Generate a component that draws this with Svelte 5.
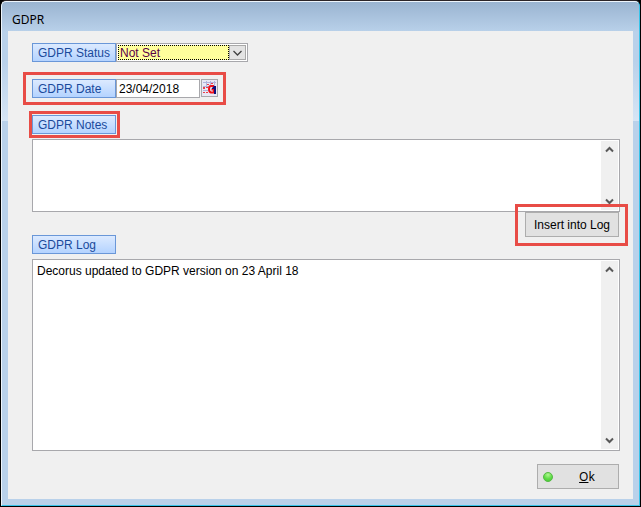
<script>
  let status = $state('Not Set');
  let date = $state('23/04/2018');
  let notes = $state('');
  let log = $state('Decorus updated to GDPR version on 23 April 18');

  let notesBox = $state();
  let logBox = $state();

  function insertIntoLog() {
    if (!notes.trim()) return;
    log = log + '\n' + notes;
    notes = '';
  }
</script>

{#snippet scroller(name, box)}
  <div class="scroller">
    <button class="scroll-btn" type="button" aria-label="Scroll {name} up" onclick={() => box?.scrollBy(0, -16)}>
      <svg width="9" height="7" viewBox="0 0 9 7"><path d="M1 5.5 4.5 2 8 5.5" /></svg>
    </button>
    <button class="scroll-btn" type="button" aria-label="Scroll {name} down" onclick={() => box?.scrollBy(0, 16)}>
      <svg width="9" height="7" viewBox="0 0 9 7"><path d="M1 1.5 4.5 5 8 1.5" /></svg>
    </button>
  </div>
{/snippet}

<div class="window">
  <div class="frame">
    <header class="titlebar">GDPR</header>

    <main class="content">
      <div class="row">
        <label class="tag" for="status">GDPR Status</label>
        <div class="combo">
          <select id="status" bind:value={status}>
            <option>Not Set</option>
            <option>Set</option>
          </select>
          <span class="combo-arrow">
            <svg width="9" height="6" viewBox="0 0 9 6"><path d="M.5 1 4.5 5 8.5 1" /></svg>
          </span>
        </div>
      </div>

      <div class="row date-row marked mark-date">
        <label class="tag" for="date">GDPR Date</label>
        <input id="date" class="date" type="text" bind:value={date} />
        <button class="calendar" type="button" aria-label="Pick a date">
          <svg width="15" height="16" viewBox="0 0 15 16">
            <rect width="15" height="16" fill="#e8e8f4" />
            <path d="M1 2.5h13M1 6.5h13M1 10.5h5M4.5 1v5M8.5 1v4M12.500 1v5" stroke="#b0b4dc" />
            <path d="M1 7h2v2H1zM4 7h2v1H4zM1 12h2v1H1zM4 12h2v1H4zM5 4h2v1H5zM9 3h2v1H9z" fill="#e8404c" />
            <path d="M12 6H9Q7 6 7 9T9 12.500H12V9.500H9.500" fill="none" stroke="#f01018" stroke-width="2" />
            <path d="M10 8l2-2h2v8h-2V9h-2z" fill="#10107c" />
          </svg>
        </button>
      </div>

      <div class="row notes-row">
        <div class="marked mark-notes">
          <label class="tag" for="notes">GDPR Notes</label>
        </div>
      </div>

      <div class="memo notes">
        <textarea id="notes" bind:value={notes} bind:this={notesBox}></textarea>
        {@render scroller('notes', notesBox)}
      </div>

      <div class="log-head">
        <label class="tag" for="log">GDPR Log</label>
        <div class="marked mark-insert">
          <button class="btn insert" type="button" onclick={insertIntoLog}>Insert into Log</button>
        </div>
      </div>

      <div class="memo log">
        <textarea id="log" bind:value={log} bind:this={logBox}></textarea>
        {@render scroller('log', logBox)}
      </div>

      <footer class="actions">
        <button class="btn ok" type="button" accesskey="o">
          <svg class="led" width="10" height="10" viewBox="0 0 10 10">
            <defs>
              <radialGradient id="led" cx="50%" cy="25%" r="75%">
                <stop offset="0" stop-color="#b0f890" />
                <stop offset=".6" stop-color="#60dc48" />
                <stop offset="1" stop-color="#48cc34" />
              </radialGradient>
            </defs>
            <circle cx="5" cy="5" r="4.5" fill="url(#led)" stroke="#58b848" />
          </svg>
          <span><u>O</u>k</span>
        </button>
      </footer>
    </main>
  </div>
</div>

<style>
  :global(body) {
    background: #000;
  }

  .window {
    box-sizing: border-box;
    min-height: 100vh;
    display: flex;
    border: 1px solid #000;
    border-top-color: #2b2428;
    border-radius: 6px 6px 0 0;
    background: #000;
    font: 12px/16px "Liberation Sans", Arial, sans-serif;
    color: #000;
  }

  .frame {
    flex: 1;
    display: flex;
    flex-direction: column;
    padding: 0 6px 6px;
    border: 1px solid #eef5fc;
    border-right-color: #38c4ea;
    border-bottom-color: #38c4ea;
    border-radius: 5px 5px 0 0;
    background:
      linear-gradient(#9ab4d1 0, #b9d1ea 30px, #b9d1ea 60px, #d6e5f5 119px, transparent 119px),
      #b9d1ea;
  }

  .titlebar {
    height: 29px;
    box-sizing: border-box;
    padding: 10px 4px 0;
    font: 12px/16px "Noto Sans", "Open Sans", sans-serif;
  }

  .content {
    flex: 1;
    display: flex;
    flex-direction: column;
    padding: 12px 13px 10px 24px;
    background: #f0f0f0;
  }

  button,
  input,
  select,
  textarea {
    font: inherit;
    color: inherit;
    margin: 0;
    border-radius: 0;
  }

  svg {
    display: block;
  }

  .row {
    display: flex;
    align-self: flex-start;
    height: 19px;
  }

  .date-row {
    margin-top: 17px;
  }

  .notes-row {
    margin-top: 17px;
  }

  .tag {
    display: block;
    box-sizing: border-box;
    width: 84px;
    height: 19px;
    padding: 0 5px;
    border: 1px solid #6a97d8;
    background: linear-gradient(#dceaff, #b4d3ff);
    color: #1a4a9c;
    line-height: 18px;
    white-space: nowrap;
  }

  .combo {
    position: relative;
    box-sizing: border-box;
    width: 132px;
    padding: 1px;
    border: 1px solid #a8a8ac;
    background: #fff;
  }

  .combo select {
    display: block;
    box-sizing: border-box;
    width: 111px;
    height: 15px;
    padding: 0 1px;
    border: 1px dotted #000;
    outline: none;
    appearance: none;
    background: #ffff9c;
    color: #5a0048;
    line-height: 15px;
  }

  .combo-arrow {
    position: absolute;
    top: 1px;
    right: 1px;
    box-sizing: border-box;
    width: 17px;
    height: 15px;
    display: flex;
    align-items: center;
    justify-content: center;
    border: 1px solid #a8a8a8;
    background: #e3e3e3;
    pointer-events: none;
  }

  .combo-arrow path {
    fill: none;
    stroke: #404040;
    stroke-width: 1.3;
  }

  .date {
    box-sizing: border-box;
    width: 84px;
    height: 19px;
    padding: 0 2px;
    border: 1px solid #a8a8ac;
    background: #fff;
    outline: none;
  }

  .calendar {
    box-sizing: border-box;
    width: 17px;
    height: 18px;
    margin: 0 0 0 1px;
    padding: 0;
    border: 1px solid #a8a8ac;
    background: #e8e8f4;
  }

  /* red callouts around the fields */
  .marked {
    position: relative;
  }

  .marked::after {
    content: "";
    position: absolute;
    border: 3px solid #e84c46;
    pointer-events: none;
  }

  .mark-date::after {
    inset: -7px -8px -7px -9px;
  }

  .mark-notes::after {
    inset: -4px -4px -4px -3px;
  }

  .mark-insert::after {
    inset: -8px -9px -9px -10px;
  }

  .memo {
    display: flex;
    box-sizing: border-box;
    margin-top: 5px;
    padding: 1px;
    border: 1px solid #a8a8ac;
    background: #fff;
  }

  .notes {
    height: 73px;
  }

  .log {
    flex: 1;
    min-height: 160px;
  }

  .memo textarea {
    flex: 1;
    min-width: 0;
    box-sizing: border-box;
    padding: 2px 3px;
    border: 0;
    outline: none;
    resize: none;
    overflow: hidden;
    background: #fff;
  }

  .scroller {
    width: 17px;
    display: flex;
    flex-direction: column;
    justify-content: space-between;
    background: #f0f0f0;
  }

  .scroll-btn {
    width: 17px;
    height: 17px;
    padding: 0;
    border: 0;
    display: flex;
    align-items: center;
    justify-content: center;
    background: none;
  }

  .scroll-btn path {
    fill: none;
    stroke: #585858;
    stroke-width: 2;
  }

  .log-head {
    display: flex;
    align-items: flex-end;
    justify-content: space-between;
    height: 42px;
  }

  .log-head .mark-insert {
    align-self: flex-start;
    margin-right: 1px;
  }

  .btn {
    display: block;
    box-sizing: border-box;
    height: 25px;
    padding: 0;
    border: 1px solid #adadad;
    background: #e1e1e1;
    white-space: nowrap;
  }

  .insert {
    width: 94px;
  }

  .actions {
    display: flex;
    justify-content: flex-end;
    margin: 13px 1px 0 0;
  }

  .ok {
    display: flex;
    align-items: center;
    gap: 8px;
    width: 82px;
    padding: 0 5px;
    font-family: "Noto Sans", "Open Sans", sans-serif;
  }

  .ok span {
    flex: 1;
    text-align: center;
  }
</style>
